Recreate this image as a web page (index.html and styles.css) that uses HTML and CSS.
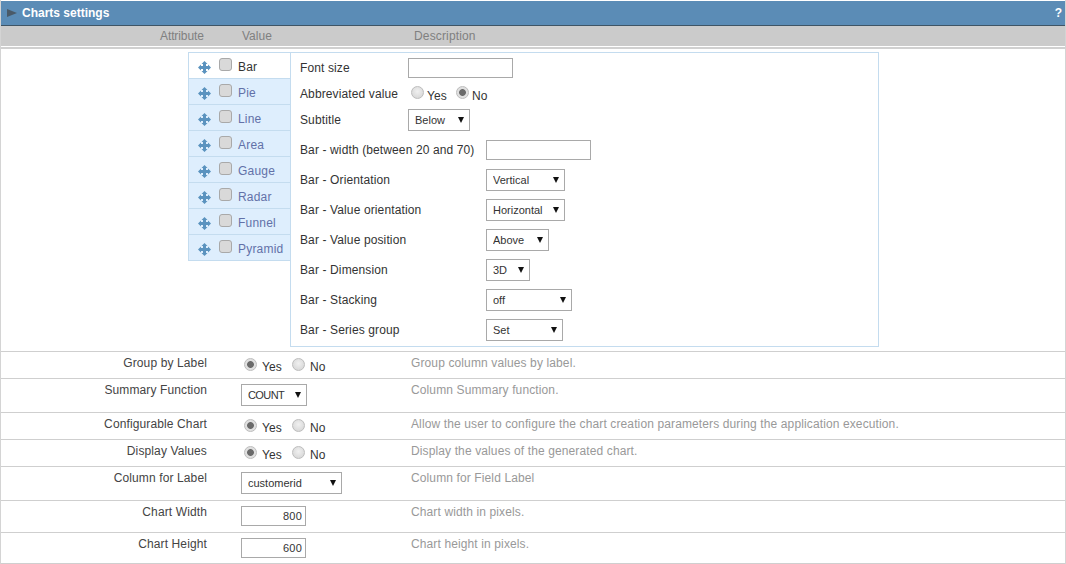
FILE: index.html
```html
<!DOCTYPE html>
<html lang="en">
<head>
<meta charset="utf-8">
<title>Charts settings</title>
<link rel="stylesheet" href="styles.css">
</head>
<body>
<svg class="defs" width="0" height="0" aria-hidden="true">
  <symbol id="move" viewBox="0 0 13 13">
    <path d="M6.5 0 9.5 3H8V5H10V3.5L13 6.5 10 9.5V8H8V10H9.5L6.5 13 3.5 10H5V8H3V9.5L0 6.5 3 3.5V5H5V3H3.5z"/>
  </symbol>
</svg>
<main class="page">
  <header class="titlebar">
    <span class="title"><i class="play"></i>Charts settings</span>
    <span class="help">?</span>
  </header>
  <div class="heads">
    <span class="head-attr">Attribute</span>
    <span class="head-val">Value</span>
    <span class="head-desc">Description</span>
  </div>

  <section class="charts">
    <ul class="tabs">
      <li class="tab active"><svg class="move"><use href="#move"/></svg><input type="checkbox"><span>Bar</span></li>
      <li class="tab"><svg class="move"><use href="#move"/></svg><input type="checkbox"><span>Pie</span></li>
      <li class="tab"><svg class="move"><use href="#move"/></svg><input type="checkbox"><span>Line</span></li>
      <li class="tab"><svg class="move"><use href="#move"/></svg><input type="checkbox"><span>Area</span></li>
      <li class="tab"><svg class="move"><use href="#move"/></svg><input type="checkbox"><span>Gauge</span></li>
      <li class="tab"><svg class="move"><use href="#move"/></svg><input type="checkbox"><span>Radar</span></li>
      <li class="tab"><svg class="move"><use href="#move"/></svg><input type="checkbox"><span>Funnel</span></li>
      <li class="tab"><svg class="move"><use href="#move"/></svg><input type="checkbox"><span>Pyramid</span></li>
    </ul>
    <div class="options">
      <div class="opts-short">
        <div class="opt"><span class="opt-label">Font size</span><input class="text w105" type="text"></div>
        <div class="opt"><span class="opt-label">Abbreviated value</span>
          <span class="radios"><input type="radio" name="abbr"><span class="rtext">Yes</span><input type="radio" name="abbr" checked><span class="rtext">No</span></span></div>
        <div class="opt"><span class="opt-label">Subtitle</span><span class="sel w62"><select><option>Below</option></select></span></div>
      </div>
      <div class="opts-long">
        <div class="opt"><span class="opt-label">Bar - width (between 20 and 70)</span><input class="text w105" type="text"></div>
        <div class="opt"><span class="opt-label">Bar - Orientation</span><span class="sel w79"><select><option>Vertical</option></select></span></div>
        <div class="opt"><span class="opt-label">Bar - Value orientation</span><span class="sel w79"><select><option>Horizontal</option></select></span></div>
        <div class="opt"><span class="opt-label">Bar - Value position</span><span class="sel w63"><select><option>Above</option></select></span></div>
        <div class="opt"><span class="opt-label">Bar - Dimension</span><span class="sel w44"><select><option>3D</option></select></span></div>
        <div class="opt"><span class="opt-label">Bar - Stacking</span><span class="sel w86"><select><option>off</option></select></span></div>
        <div class="opt"><span class="opt-label">Bar - Series group</span><span class="sel w77"><select><option>Set</option></select></span></div>
      </div>
    </div>
  </section>

  <div class="row h27">
    <span class="label">Group by Label</span>
    <span class="radios"><input type="radio" name="g" checked><span class="rtext">Yes</span><input type="radio" name="g"><span class="rtext">No</span></span>
    <span class="desc">Group column values by label.</span>
  </div>
  <div class="row h34">
    <span class="label">Summary Function</span>
    <span class="value"><span class="sel w66 caps"><select><option>COUNT</option></select></span></span>
    <span class="desc">Column Summary function.</span>
  </div>
  <div class="row h27">
    <span class="label">Configurable Chart</span>
    <span class="radios"><input type="radio" name="c" checked><span class="rtext">Yes</span><input type="radio" name="c"><span class="rtext">No</span></span>
    <span class="desc">Allow the user to configure the chart creation parameters during the application execution.</span>
  </div>
  <div class="row h27">
    <span class="label">Display Values</span>
    <span class="radios"><input type="radio" name="d" checked><span class="rtext">Yes</span><input type="radio" name="d"><span class="rtext">No</span></span>
    <span class="desc">Display the values of the generated chart.</span>
  </div>
  <div class="row h34">
    <span class="label">Column for Label</span>
    <span class="value"><span class="sel w101"><select><option>customerid</option></select></span></span>
    <span class="desc">Column for Field Label</span>
  </div>
  <div class="row h32">
    <span class="label">Chart Width</span>
    <span class="value"><input class="text num" type="text" value="800"></span>
    <span class="desc">Chart width in pixels.</span>
  </div>
  <div class="row h32">
    <span class="label">Chart Height</span>
    <span class="value"><input class="text num" type="text" value="600"></span>
    <span class="desc">Chart height in pixels.</span>
  </div>
</main>
</body>
</html>
```
FILE: styles.css
```css
* { box-sizing: border-box; }
html, body { margin: 0; background: #fff; }
body { font: 12px/14px "Liberation Sans", Arial, sans-serif; color: #333; overflow: hidden; }
.defs { position: absolute; }
.page { padding-top: 1px; height: 564px; border-left: 1px solid #d4d4d4; border-right: 1px solid #d4d4d4; }

.titlebar {
  height: 25px; display: flex; justify-content: space-between; align-items: center;
  background: #5b8cb6; border-bottom: 1px solid #3f5566;
  color: #fff; font-weight: bold; padding: 0 3px 0 6px;
}
.title { display: flex; align-items: center; }
.play {
  width: 0; height: 0; margin-right: 5px;
  border-left: 10px solid #4a5a68;
  border-top: 4.5px solid transparent; border-bottom: 4.5px solid transparent;
}
.heads {
  height: 20px; background: #cbcbcb; color: #808080;
  display: flex; align-items: center;
}
.head-attr { margin-left: 159px; width: 82px; letter-spacing: -.1px; }
.head-val { width: 172px; }
.head-desc { letter-spacing: .15px; }

.charts {
  border-top: 2px solid #d0d0d0; margin-top: 1px;
  height: 304px; padding: 3px 0 0 187px;
  display: flex; align-items: flex-start;
}
.tabs {
  list-style: none; margin: 0; padding: 0; width: 102px;
  border: 1px solid #c4dcef; border-right: 0;
}
.tab {
  height: 26px; display: flex; align-items: center; padding-left: 9px;
  background: #deeefd; color: #6271a8; border-top: 1px solid #c4dcef;
}
.tab:first-child { border-top: 0; height: 25px; }
.tab.active { background: #fff; color: #333; }
.move { width: 13px; height: 13px; fill: #5b93bf; flex: none; margin-top: 3px; }
.tab input {
  appearance: none; width: 13px; height: 13px; margin: -2px 6px 0 8px; flex: none;
  background: #d9d9d9; border: 1px solid #a9a9a9; border-radius: 3px;
}
.tab span { letter-spacing: .2px; padding-top: 2px; }

.options {
  width: 589px; height: 295px; border: 1px solid #c4dcef; padding: 2px 0 0 9px;
  letter-spacing: .12px;
}
.opts-short .opt { height: 26px; display: flex; align-items: center; }
.opts-short .opt-label { width: 108px; }
.opts-short .radios { margin-left: 3px; }
.opts-short .radios input { margin-right: 3px; }
.opts-short .rtext { margin-right: 8px; margin-top: 3px; }
.opts-long { margin-top: 2px; }
.opts-long .opt { height: 30px; display: flex; align-items: center; }
.opts-long .opt-label { width: 186px; }

.row {
  display: grid; grid-template-columns: 206px 170px 1fr; align-items: start;
  border-top: 1px solid #cfcfcf;
  letter-spacing: .12px;
}
.page > .row:last-child { border-bottom: 1px solid #cfcfcf; }
.h27 { height: 27px; } .h34 { height: 34px; } .h32 { height: 32px; }
.label { text-align: right; padding-top: 4px; color: #444; }
.row > .radios { margin-left: 37px; padding-top: 6px; }
.row > .value { margin-left: 34px; padding-top: 5px; display: flex; }
.desc { color: #999; padding: 4px 0 0 34px; }

.radios { display: inline-flex; align-items: center; }
.radios input {
  appearance: none; width: 13px; height: 13px; margin: -4px 5px 0 0; flex: none;
  border-radius: 50%; background: radial-gradient(circle at 50% 40%, #f0f0f0, #d2d2d2); border: 1px solid #bdbdbd;
}
.radios input:checked { background: radial-gradient(circle, #6a6a6a 0 3px, #e0e0e0 3.8px); }
.rtext { margin: 2px 9px 0 0; width: 21px; }
.rtext:last-child { margin-right: 0; }

.text {
  height: 20px; border: 1px solid #a9a9a9; background: #fff; padding: 0 3px;
  font: 12px "Liberation Sans", Arial, sans-serif; color: #333; border-radius: 0; outline: 0;
}
.w105 { width: 105px; }
.num { width: 65px; text-align: right; font-size: 11px; letter-spacing: .2px; padding: 0 3px 0 0; }

.sel { display: inline-block; position: relative; height: 22px; }
.sel::after {
  content: ""; position: absolute; right: 6px; top: 8px; width: 0; height: 0;
  border-top: 6px solid #111; border-left: 3.5px solid transparent; border-right: 3.5px solid transparent;
}
.sel select {
  appearance: none; width: 100%; height: 100%; border: 1px solid #a9a9a9; border-radius: 0;
  background: #fff; padding: 0 0 0 6px; color: #333;
  font: 11px "Liberation Sans", Arial, sans-serif;
}
.caps select { letter-spacing: -.6px; }
.w44 { width: 44px; } .w62 { width: 62px; } .w63 { width: 63px; } .w66 { width: 66px; }
.w77 { width: 77px; } .w79 { width: 79px; } .w86 { width: 86px; } .w101 { width: 101px; }
```
